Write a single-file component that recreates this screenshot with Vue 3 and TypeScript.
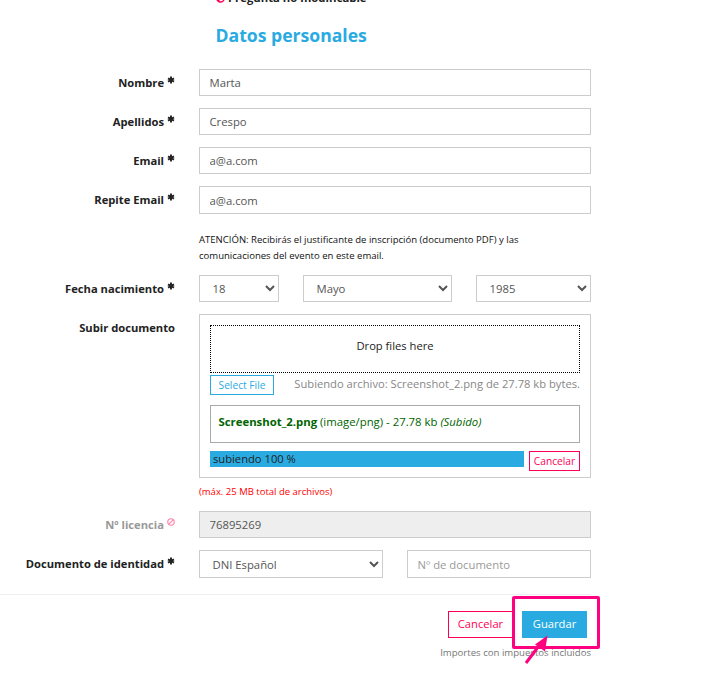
<script setup lang="ts">
import { ref } from 'vue'

interface TextField {
  label: string
  value: string
  tall?: boolean
}

const fields = ref<TextField[]>([
  { label: 'Nombre', value: 'Marta' },
  { label: 'Apellidos', value: 'Crespo' },
  { label: 'Email', value: 'a@a.com' },
  { label: 'Repite Email', value: 'a@a.com', tall: true },
])
const day = ref('18')
const month = ref('Mayo')
const year = ref('1985')
const idType = ref('DNI Español')
const idNumber = ref('')
const licence = ref('76895269')
const progress = ref(100)
</script>

<template>
  <main class="page">
    <div class="legend">
      <svg class="ban" viewBox="0 0 10 10"><circle cx="5" cy="5" r="4" /><path d="M2.3 7.7 7.7 2.3" /></svg>
      <b>Pregunta no modificable</b>
    </div>
    <h2>Datos personales</h2>

    <div v-for="f in fields" :key="f.label" class="row">
      <label class="label">{{ f.label }}
        <svg class="star" viewBox="0 0 8 8"><path d="M4 .5v7M1 2.3l6 3.4M7 2.3 1 5.7" /></svg>
      </label>
      <input v-model="f.value" class="control" :class="{ tall: f.tall }" />
    </div>

    <p class="notice">ATENCIÓN: Recibirás el justificante de inscripción (documento PDF) y las<br />comunicaciones del evento en este email.</p>

    <div class="row">
      <label class="label">Fecha nacimiento
        <svg class="star" viewBox="0 0 8 8"><path d="M4 .5v7M1 2.3l6 3.4M7 2.3 1 5.7" /></svg>
      </label>
      <div class="group date">
        <select v-model="day" class="control"><option>18</option></select>
        <select v-model="month" class="control"><option>Mayo</option></select>
        <select v-model="year" class="control"><option>1985</option></select>
      </div>
    </div>

    <div class="row upload-row">
      <label class="label">Subir documento</label>
      <section class="upload">
        <div class="drop">Drop files here</div>
        <div class="picker">
          <button class="small blue">Select File</button>
          <span class="status">Subiendo archivo: Screenshot_2.png de 27.78 kb bytes.</span>
        </div>
        <div class="file"><span><b>Screenshot_2.png</b> (image/png) - 27.78 kb <i>(Subido)</i></span></div>
        <div class="progress">
          <div class="track"><div class="bar" :style="{ width: progress + '%' }"><span>subiendo {{ progress }} %</span></div></div>
          <button class="small pink">Cancelar</button>
        </div>
      </section>
    </div>
    <p class="limit">(máx. 25 MB total de archivos)</p>

    <div class="row">
      <label class="label muted">Nº licencia
        <svg class="ban" viewBox="0 0 10 10"><circle cx="5" cy="5" r="4" /><path d="M2.3 7.7 7.7 2.3" /></svg>
      </label>
      <input v-model="licence" class="control" disabled />
    </div>

    <div class="row last">
      <label class="label">Documento de identidad
        <svg class="star" viewBox="0 0 8 8"><path d="M4 .5v7M1 2.3l6 3.4M7 2.3 1 5.7" /></svg>
      </label>
      <div class="group identity">
        <select v-model="idType" class="control tall"><option>DNI Español</option></select>
        <input v-model="idNumber" class="control tall" placeholder="Nº de documento" />
      </div>
    </div>

    <footer>
      <div class="actions">
        <button class="cancel">Cancelar</button>
        <button class="save">Guardar</button>
      </div>
      <p class="tax">Importes con impuestos incluidos</p>
      <svg class="highlight" viewBox="0 0 88 68">
        <rect x="1.5" y="1.5" width="85" height="50" rx="0.5" />
        <path class="shaft" d="M14 67 29 47" />
        <path class="head" d="M35.5 39.5 23 48.5 33 55.5z" />
      </svg>
    </footer>
  </main>
</template>

<style>
body { margin: 0; background: #fff; overflow: hidden; }
</style>

<style scoped>
* { box-sizing: border-box; }
.page {
  width: 591px;
  height: 681px;
  font-family: "Open Sans", sans-serif;
  font-size: 11.2px;
  line-height: 16px;
  color: #222;
}
p, h2 { margin: 0; }
button, input, select { font-family: inherit; margin: 0; }
.legend { display: flex; height: 23px; margin: 0 0 0 216px; gap: 3px; }
.legend b { margin-top: -10px; white-space: nowrap; font-size: 11.3px; }
.legend .ban { margin-top: -6px; }
.ban { width: 9px; height: 9px; flex: none; fill: none; stroke: #ff0055; stroke-width: 1.7; overflow: visible; }
h2 { height: 46px; padding-left: 215.5px; font-size: 17.6px; line-height: 24px; color: #29abe2; }
.row { display: grid; grid-template-columns: 175px 392px; column-gap: 24px; margin-bottom: 12px; }
.label { display: flex; justify-content: flex-end; gap: 3px; padding-top: 6px; font-weight: 700; white-space: nowrap; }
.star { width: 8px; height: 8px; margin-top: .5px; flex: none; fill: none; stroke: #222; stroke-width: 1.9; }
.label .ban { width: 8px; height: 8px; stroke-width: 1.4; margin-top: 1px; }
.muted { color: #999; }
.muted .ban { stroke: #ff80aa; }
.control {
  width: 100%;
  height: 27px;
  border: 1px solid #ccc;
  border-radius: 0;
  background: #fff;
  padding: 0 9px 1px 9.5px;
  font-size: 11.3px;
  color: #555;
  outline: 0;
}
.control.tall { height: 28px; padding-top: 1px; padding-bottom: 0; }
.control:disabled { background: #eee; }
.control::placeholder { color: #999; opacity: 1; }
select.control { padding: 0 0 0 8.5px; }
.notice { height: 49px; margin-top: 5px; padding: 6px 0 0 199px; font-size: 9.55px; color: #111; }
.group { display: grid; column-gap: 24px; }
.date { grid-template-columns: 80px 149px 115px; }
.identity { grid-template-columns: 184px 184px; }
.upload-row { margin-bottom: 6px; }
.upload { height: 164px; border: 1px solid #ccc; padding: 10px; }
.drop { height: 48px; border: 1px dotted #000; display: flex; justify-content: center; padding-top: 12px; }
.picker { display: flex; justify-content: space-between; height: 32px; padding-top: 2px; }
.status { color: #888; line-height: 18px; white-space: nowrap; }
.small { height: 20px; font-size: 10.2px; line-height: 18px; background: #fff; padding: 0; }
.blue { width: 64px; border: 1px solid #29abe2; color: #29abe2; }
.pink { width: 51px; border: 1px solid #ff0055; color: #ff0055; }
.file { height: 38px; border: 1px solid #aaa; padding: 8px 7.5px; font-size: 11.35px; color: #006400; white-space: nowrap; }
.progress { display: flex; gap: 5px; padding-top: 8px; }
.track { flex: 1; }
.bar { height: 16px; background: #29abe2; padding-left: 3px; color: #222; }
.limit { height: 27px; padding-left: 199px; font-size: 9.5px; color: #f00; }
.last { margin-bottom: 16px; }
footer { position: relative; border-top: 1px solid #eee; padding-top: 16px; }
.actions { display: flex; justify-content: flex-end; gap: 9px; padding-right: 4px; }
.actions button { height: 27px; font-size: 11.2px; padding: 0 0 2px; }
.cancel { width: 65px; border: 1px solid #ff0055; background: #fff; color: #ff0055; }
.save { width: 65px; border: 0; background: #29abe2; color: #fff; }
.tax { margin-top: 7px; text-align: right; font-size: 9.6px; color: #777; }
.highlight { position: absolute; left: 512px; top: 1px; width: 88px; height: 68px; fill: none; stroke: #ff0080; stroke-width: 3; overflow: visible; }
.highlight .head { fill: #ff0080; stroke: none; }
</style>
